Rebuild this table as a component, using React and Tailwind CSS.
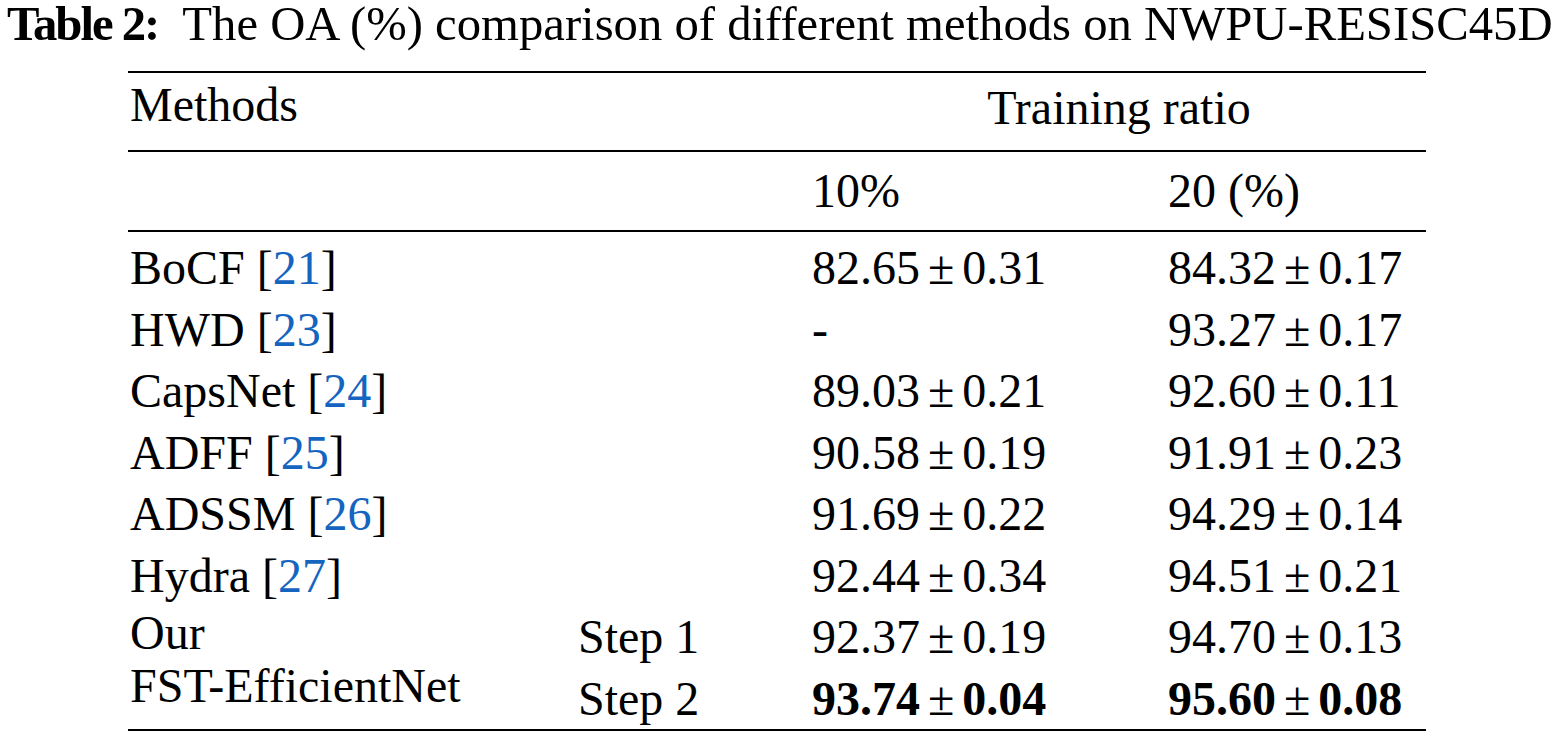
import React from "react";

const serif = { fontFamily: '"Liberation Serif", "Times New Roman", serif' };

function Ref({ n }) {
  return (
    <>
      [<span className="text-[#1565c0]">{n}</span>]
    </>
  );
}

function Val({ v, e, bold }) {
  return (
    <span className={bold ? "font-bold" : ""}>
      {v}
      <span className="font-normal mx-[8px]">±</span>
      {e}
    </span>
  );
}

const rows = [
  { m: "BoCF ", r: "21", a: ["82.65", "0.31"], b: ["84.32", "0.17"] },
  { m: "HWD ", r: "23", a: null, b: ["93.27", "0.17"] },
  { m: "CapsNet ", r: "24", a: ["89.03", "0.21"], b: ["92.60", "0.11"] },
  { m: "ADFF ", r: "25", a: ["90.58", "0.19"], b: ["91.91", "0.23"] },
  { m: "ADSSM ", r: "26", a: ["91.69", "0.22"], b: ["94.29", "0.14"] },
  { m: "Hydra ", r: "27", a: ["92.44", "0.34"], b: ["94.51", "0.21"] },
];

export default function App() {
  return (
    <div className="w-[1554px] h-[737px] bg-white text-black overflow-hidden" style={serif}>
      <div className="pl-[7px] text-[48.7px] leading-[48px] whitespace-nowrap">
        <span className="font-bold tracking-[-2px]">Table 2:</span>
        <span className="ml-[24px]">The OA (%) comparison of different methods on NWPU-RESISC45D</span>
      </div>

      <div className="ml-[128px] mt-[23px] w-[1298px] text-[48px] border-t-2 border-b-2 border-black">
        {/* header row 1 */}
        <div className="grid grid-cols-[450px_234px_356px_258px] h-[79px] leading-[61.5px] border-b-2 border-black">
          <div className="pl-[2px] pt-[1px]">Methods</div>
          <div />
          <div className="col-span-2 text-center pt-[4px]">Training ratio</div>
        </div>
        {/* header row 2 */}
        <div className="grid grid-cols-[450px_234px_356px_258px] h-[80px] leading-[61.5px] border-b-2 border-black">
          <div />
          <div />
          <div className="pt-[8px]">10%</div>
          <div className="pt-[8px]">20 (%)</div>
        </div>
        {/* body */}
        <div className="grid grid-cols-[450px_234px_356px_258px] auto-rows-[61.5px] leading-[61.5px] pt-[5px]">
          {rows.map((r) => (
            <React.Fragment key={r.r}>
              <div className="pl-[2px] whitespace-nowrap">
                {r.m}
                <Ref n={r.r} />
              </div>
              <div />
              <div className="whitespace-nowrap">{r.a ? <Val v={r.a[0]} e={r.a[1]} /> : "-"}</div>
              <div className="whitespace-nowrap">
                <Val v={r.b[0]} e={r.b[1]} />
              </div>
            </React.Fragment>
          ))}
          <div className="row-span-2 pl-[2px] leading-[53px] whitespace-nowrap">
            <div>Our</div>
            <div>FST-EfficientNet</div>
          </div>
          <div>Step 1</div>
          <div className="whitespace-nowrap">
            <Val v="92.37" e="0.19" />
          </div>
          <div className="whitespace-nowrap">
            <Val v="94.70" e="0.13" />
          </div>
          <div>Step 2</div>
          <div className="whitespace-nowrap">
            <Val v="93.74" e="0.04" bold />
          </div>
          <div className="whitespace-nowrap">
            <Val v="95.60" e="0.08" bold />
          </div>
        </div>
      </div>
    </div>
  );
}
